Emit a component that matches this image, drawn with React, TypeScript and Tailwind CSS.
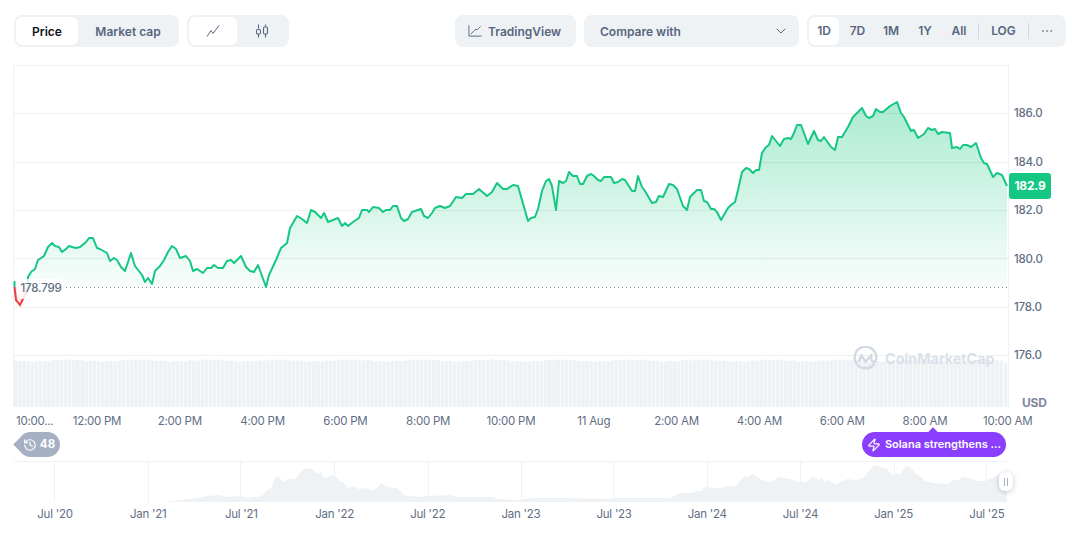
import { ChevronDown, Ellipsis, History, Zap } from "lucide-react";

const linePts =
  "28,277 31,272 35,269 38,260 44,256 48,247 52,243 55,246 59,247 62,252 66,249 69,246 72,247 76,248 80,247 86,242 89,238 93,238 97,248 100,249 107,253 110,261 114,258 117,260 121,267 125,271 127,265 131,253 135,266 142,275 145,282 148,278 152,284 155,271 160,266 164,260 168,252 172,246 176,249 180,258 186,256 190,261 193,271 197,269 203,273 207,268 211,268 214,265 218,268 223,268 227,261 231,260 234,263 241,256 246,267 250,271 254,272 258,265 266,287 269,275 276,260 281,248 287,243 290,228 293,223 297,216 302,219 307,223 311,210 315,212 321,218 324,213 328,222 338,218 342,226 345,223 348,226 353,222 359,218 362,210 367,210 369,212 373,207 379,208 383,212 386,210 390,210 393,206 397,206 401,218 404,221 408,219 412,212 415,211 421,209 424,216 428,218 432,213 435,208 440,206 445,208 450,206 456,197 462,198 466,194 473,194 479,189 487,196 492,192 497,183 503,189 507,189 513,185 518,186 522,200 524,207 528,221 531,218 535,217 538,209 542,191 546,181 549,179 552,186 556,210 559,181 563,183 566,181 569,172 573,176 577,176 580,184 583,184 587,176 591,174 594,176 598,180 601,181 604,177 611,177 614,183 618,182 622,179 625,180 632,191 635,191 638,176 642,187 645,191 652,203 656,202 659,196 663,197 669,184 673,185 677,189 683,206 687,210 690,197 697,190 701,190 704,201 707,202 711,209 714,209 717,212 721,220 728,208 731,205 735,202 738,190 742,172 746,168 749,169 753,173 756,170 759,170 762,153 766,147 769,145 772,136 780,146 784,139 788,138 791,139 794,133 797,125 801,125 808,144 814,131 818,140 821,141 824,137 831,147 835,150 838,137 842,137 848,127 853,117 857,113 862,108 866,116 869,118 873,116 876,109 880,112 883,112 890,106 897,102 901,113 904,117 908,125 911,131 914,130 918,138 924,134 928,128 932,130 935,129 938,134 942,132 950,133 952,148 957,147 960,149 963,145 967,145 971,147 976,143 981,158 984,163 987,164 993,177 997,173 1002,175 1007,186";

const miniPts =
  "14,502 165,502 180,500 197,498 207,496 220,495 225,497 240,496 248,498 262,496 267,490 271,488 275,478 278,476 283,482 288,479 295,479 300,473 306,468 312,469 317,474 321,472 324,478 332,475 337,478 340,482 343,482 348,488 353,486 358,489 363,488 372,490 377,488 381,483 387,487 397,488 402,492 403,495 410,496 422,497 425,496 428,496 450,495 457,497 470,497 485,497 493,497 497,499 520,500 530,498 570,498 603,499 617,498 670,498 680,493 692,493 697,491 701,491 705,487 712,488 720,488 728,486 735,487 740,481 745,476 748,477 753,474 762,480 768,482 775,480 778,477 790,479 798,482 807,482 813,476 818,480 822,478 825,482 828,480 836,484 847,479 855,480 863,478 868,472 874,465 887,469 893,476 897,473 899,475 906,466 910,467 915,473 920,476 925,481 933,483 948,484 953,480 958,480 963,477 970,478 977,481 985,481 990,479 998,475 1007,473 1007,502";

const gridY = [113, 162, 210, 258, 307, 355];
const yLabels = ["186.0", "184.0", "182.0", "180.0", "178.0", "176.0"];
const miniGrid = [54, 148, 240, 334, 428, 521, 613, 707, 800, 894, 986];
const hours = ["12:00 PM", "2:00 PM", "4:00 PM", "6:00 PM", "8:00 PM", "10:00 PM", "11 Aug", "2:00 AM", "4:00 AM", "6:00 AM", "8:00 AM", "10:00 AM"];
const months = ["Jul '20", "Jan '21", "Jul '21", "Jan '22", "Jul '22", "Jan '23", "Jul '23", "Jan '24", "Jul '24", "Jan '25", "Jul '25"];

// volume bars, only a small wobble along the top
const bars = Array.from({ length: 239 }, (_, i) => ({
  x: 14 + i * 4.14,
  top: 360.5 + Math.sin(i * 0.37) * 0.8 + Math.sin(i * 1.9) * 0.5,
}));

const App = () => {
  return (
    <div className="w-[1072px] h-[540px] bg-white overflow-hidden pt-[15px] font-['Inter',sans-serif] text-[#616e85]">
      {/* toolbar */}
      <div className="flex h-8 pl-[14px] pr-[6px] text-xs font-semibold text-[#58667e]">
        <div className="flex w-[165px] rounded-lg bg-[#eff2f5] p-[2px]">
          <div className="flex w-[62px] items-center justify-center rounded-md bg-white pt-px text-[#0d1421]">Price</div>
          <div className="flex flex-1 items-center justify-center pl-px pt-px">Market cap</div>
        </div>
        <div className="ml-2 flex w-[102px] rounded-lg bg-[#eff2f5] p-[2px]">
          <div className="flex w-[48px] items-center justify-center rounded-md bg-white">
            <svg width="14" height="14" viewBox="0 0 14 14" fill="none" stroke="#58667e" strokeWidth="1">
              <path d="M1 12.5 L5 6.5 L7 9.5 L13 1.5" />
            </svg>
          </div>
          <div className="flex flex-1 items-center justify-center">
            <svg width="16" height="16" viewBox="0 0 16 16" fill="none" stroke="#58667e" strokeWidth="1.1">
              <path d="M4.5 1.5V5.5M4.5 11V14.5M11.5 1.5V3.5M11.5 11V14.5" />
              <rect x="2.5" y="6.5" width="4" height="4.5" rx="1.2" />
              <rect x="9.5" y="4" width="4" height="7" rx="1.2" />
            </svg>
          </div>
        </div>
        <div className="ml-auto flex w-[121px] items-center gap-[6px] rounded-lg bg-[#eff2f5] pl-[13px]">
          <svg width="14" height="14" viewBox="0 0 15 14" fill="none" stroke="#58667e" strokeWidth="1">
            <path d="M1 1V12.5H14.5M3 10.5L7.5 5.5H10L13.5 2" />
          </svg>
          <span className="pt-px">TradingView</span>
        </div>
        <div className="ml-2 flex w-[215px] items-center justify-between rounded-lg bg-[#eff2f5] pl-4 pr-[10px]">
          <span className="pt-[2px]">Compare with</span>
          <ChevronDown size={16} strokeWidth={1.5} className="text-[#58667e]" />
        </div>
        <div className="ml-2 flex w-[259px] items-center rounded-lg bg-[#eff2f5] p-[2px]">
          <div className="flex h-full w-[30px] items-center justify-center rounded-md bg-white">1D</div>
          <div className="flex w-[37px] justify-center">7D</div>
          <div className="flex w-[30px] justify-center">1M</div>
          <div className="flex w-[38px] justify-center">1Y</div>
          <div className="flex w-[30px] justify-center">All</div>
          <div className="ml-[4px] h-4 w-px bg-[#cfd6e4]" />
          <div className="flex w-[49px] justify-center">LOG</div>
          <div className="h-4 w-px bg-[#cfd6e4]" />
          <div className="flex flex-1 justify-center">
            <Ellipsis size={14} strokeWidth={1.5} className="text-[#808a9d]" />
          </div>
        </div>
      </div>

      {/* main chart with the price axis */}
      <div className="mt-[18px] flex h-[342px] pl-[13px]">
        <div className="relative h-[342px] w-[996px]">
          <svg width="996" height="342" viewBox="13 65 996 342">
            <defs>
              <linearGradient id="up" gradientUnits="userSpaceOnUse" x1="0" y1="102" x2="0" y2="287">
                <stop offset="0" stopColor="#16c784" stopOpacity="0.36" />
                <stop offset="1" stopColor="#16c784" stopOpacity="0.03" />
              </linearGradient>
            </defs>
            <path d="M13.5 65.5H1008.5V407M13.5 65.5V407" fill="none" stroke="#eff2f5" />
            {bars.map((b, i) => (
              <rect key={i} x={b.x} y={b.top} width="3.7" height={407 - b.top} fill="#eff2f5" />
            ))}
            <rect x="1004" y="363" width="3.4" height="44" fill="#eff2f5" />
            <polygon points={`28,287 ${linePts} 1007,287`} fill="url(#up)" />
            <path d="M14.5 287 L16 300 L20 305 L25 295 L28 287 Z" fill="#ea3943" fillOpacity="0.12" />
            {gridY.map((y) => (
              <line key={y} x1="14" x2="1008" y1={y + 0.5} y2={y + 0.5} stroke="#000" strokeOpacity="0.06" />
            ))}
            <line x1="66" x2="1008" y1="287.5" y2="287.5" stroke="#808a9d" strokeWidth="1" strokeDasharray="1 3" />
            <path d="M14.5 281 V287" fill="none" stroke="#16c784" strokeWidth="2" />
            <path d="M14.5 287 L16 300 L20 305 L25 295 L28 287" fill="none" stroke="#ea3943" strokeWidth="2" />
            <polyline points={`28,287 ${linePts}`} fill="none" stroke="#16c784" strokeWidth="2" strokeLinejoin="round" />
          </svg>
          <div className="absolute left-[4px] top-[214px] flex h-5 w-[48px] items-center justify-center rounded-md bg-white/85 text-[11.5px] font-medium tracking-[-0.2px]">
            178.799
          </div>
          <div className="absolute left-[840px] top-[281px] flex items-center gap-[7px] text-[#d8dfe9]">
            <svg width="25" height="25" viewBox="0 0 25 25" fill="none" stroke="#d3dae6" strokeWidth="2.4">
              <path d="M21.5 17.5A10.8 10.8 0 1 1 23.3 12c0 3-2 4.6-3.6 3.6-1.3-.8-1.5-2-1.5-3.6V9.5L12.6 15.5 8.5 9.5 5.5 16" />
            </svg>
            <span className="text-[14.5px] font-semibold">CoinMarketCap</span>
          </div>
        </div>
        <div className="relative flex-1 pl-[5px] pt-[24.8px] text-[11.5px] font-medium tracking-[-0.2px]">
          {yLabels.map((l) => (
            <div key={l} className="flex h-[48.4px] items-center">
              {l}
            </div>
          ))}
          <div className="mt-[14.8px] pl-[8px] text-xs font-bold leading-4 text-[#808a9d]">USD</div>
          <div className="absolute left-0 top-[108px] flex h-[26px] w-[42px] items-center justify-center rounded-[3px] bg-[#16c784] text-xs font-bold text-white">
            182.9
          </div>
        </div>
      </div>

      {/* time axis */}
      <div className="flex h-[25px] items-center pl-[14px] pt-[5px] text-[11.5px] tracking-[-0.25px]">
        <div className="w-[41.6px] pl-[2px] whitespace-nowrap">10:00...</div>
        {hours.map((h) => (
          <div key={h} className="flex w-[82.8px] justify-center whitespace-nowrap">
            {h}
          </div>
        ))}
      </div>

      {/* event badges */}
      <div className="flex h-[25px] pl-[18px] pr-[66px]">
        <div className="relative flex w-[42px] items-center justify-center gap-[3px] rounded-full bg-[#a6b0c3] text-[11.5px] font-bold text-white">
          <div className="absolute -left-[3px] top-[8px] h-[9px] w-[9px] rotate-45 bg-[#a6b0c3]" />
          <History size={14} strokeWidth={2} className="relative" />
          <span className="relative">48</span>
        </div>
        <div className="relative ml-auto flex w-[144px] items-center justify-center gap-[4px] rounded-full bg-[#8a3ffc] text-[11px] font-semibold text-white">
          <div className="absolute left-[67px] -top-[3px] h-2 w-2 rotate-45 bg-[#8a3ffc]" />
          <Zap size={14} strokeWidth={2} />
          <span className="whitespace-nowrap">Solana strengthens ...</span>
        </div>
      </div>

      {/* overview chart */}
      <div className="relative ml-[13px] mt-1 h-[42px] w-[996px]">
        <svg width="996" height="42" viewBox="13 461 996 42">
          <line x1="14" x2="1007" y1="461.5" y2="461.5" stroke="#eff2f5" />
          {miniGrid.map((x) => (
            <line key={x} x1={x + 0.5} x2={x + 0.5} y1="461" y2="502" stroke="#eff2f5" />
          ))}
          <polygon points={miniPts} fill="#eff2f5" />
        </svg>
        <div className="absolute left-[986px] top-[11px] flex h-[19px] w-[14px] items-center justify-center gap-[2px] rounded-md bg-white shadow-[0_1px_5px_rgba(88,102,126,0.35)]">
          <div className="h-2 w-px bg-[#a6b0c3]" />
          <div className="h-2 w-px bg-[#a6b0c3]" />
        </div>
      </div>
      <div className="flex h-[24px] items-center pl-[8.4px] text-[11.5px] tracking-[-0.25px]">
        {months.map((m) => (
          <div key={m} className="flex w-[93.2px] justify-center whitespace-nowrap">
            {m}
          </div>
        ))}
      </div>
    </div>
  );
};

export default App;
